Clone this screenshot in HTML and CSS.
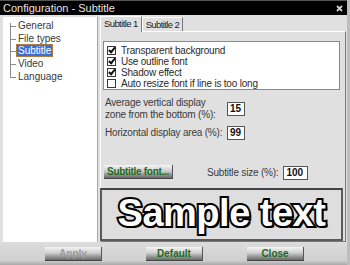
FILE: index.html
```html
<!DOCTYPE html>
<html lang="en">

<head>
    <meta charset="UTF-8">
    <title>Configuration - Subtitle</title>
    <link rel="stylesheet" href="styles.css">
</head>

<body>
    <div class="window">
        <div class="titlebar">
            <span>Configuration - Subtitle</span>
            <svg class="close" width="7" height="7" viewBox="0 0 7 7">
                <path d="M1 1L6 6M6 1L1 6" stroke="#d0d0d0" stroke-width="1.8" />
            </svg>
        </div>

        <div class="main">
            <ul class="tree">
                <li>General</li>
                <li>File types</li>
                <li><span class="selected">Subtitle</span></li>
                <li>Video</li>
                <li class="last">Language</li>
            </ul>

            <div class="tabs">
                <div class="tab-headers">
                    <span class="tab active">Subtitle 1</span>
                    <span class="tab">Subtitle 2</span>
                </div>
                <div class="tab-panel">
                    <div class="checks">
                        <div class="check"><span class="box on"></span>Transparent background</div>
                        <div class="check"><span class="box on"></span>Use outline font</div>
                        <div class="check"><span class="box on"></span>Shadow effect</div>
                        <div class="check"><span class="box"></span>Auto resize font if line is too long</div>
                    </div>

                    <div class="settings">
                        <div class="label">Average vertical display<br>zone from the bottom (%):</div>
                        <div class="input">15</div>
                        <div class="label">Horizontal display area (%):</div>
                        <div class="input">99</div>
                    </div>

                    <div class="font-row">
                        <button class="skin-button">Subtitle font...</button>
                        <span class="label size-label">Subtitle size (%):</span>
                        <div class="input wide">100</div>
                    </div>

                    <div class="sample">Sample text</div>
                </div>
            </div>
        </div>

        <div class="buttons">
            <button class="skin-button disabled">Apply</button>
            <button class="skin-button">Default</button>
            <button class="skin-button">Close</button>
        </div>
    </div>
</body>

</html>
```

FILE: styles.css
```css
body {
    margin: 0;
    padding: 0;
    font-family: "Liberation Sans", Arial, sans-serif;
    font-size: 10px;
    color: #2a2a2a;
}

.window {
    width: 350px;
    height: 265px;
    background-color: #e0e0e0;
    display: flex;
    flex-direction: column;
    box-sizing: border-box;
    border-right: 3px solid #bdbdbd;
    overflow: hidden;
}

.titlebar {
    height: 15px;
    background-color: #000;
    color: #e4e4e4;
    font-size: 11px;
    padding: 0 4px 0 3px;
    display: flex;
    justify-content: space-between;
    align-items: center;
    border-top: 1px solid #555;
    box-sizing: border-box;
}

.main {
    display: flex;
    height: 227px;
    padding: 2px 0 0 3px;
    gap: 2px;
    box-sizing: border-box;
}

.tree {
    list-style: none;
    margin: 0;
    padding: 3px 0 0 0;
    width: 94px;
    background-color: #fff;
    border-right: 1px solid #a8a8a8;
}

.tree li {
    height: 12.7px;
    line-height: 12.7px;
    padding-left: 15px;
    position: relative;
    color: #3a3a3a;
}

.tree li::before {
    content: '';
    position: absolute;
    left: 7px;
    top: 0;
    bottom: 0;
    border-left: 1px solid #8c8c8c;
}

.tree li::after {
    content: '';
    position: absolute;
    left: 7px;
    width: 6px;
    top: 6px;
    border-top: 1px solid #8c8c8c;
}

.tree li:first-child::before {
    top: 3px;
}

.tree li.last::before {
    bottom: 6px;
}

.tree .selected {
    background-color: #3b6fd6;
    color: #fff;
    outline: 1px solid #b07a44;
    padding: 0 1px;
    margin-left: -1px;
}

.tabs {
    flex: 1;
    display: flex;
    flex-direction: column;
}

.tab-headers {
    display: flex;
    height: 14px;
    align-items: flex-end;
}

.tab {
    height: 13px;
    line-height: 13px;
    padding: 0 3px;
    border: 1px solid #fff;
    border-right-color: #777;
    border-bottom: none;
    color: #222;
    font-size: 9.5px;
    letter-spacing: -0.6px;
}

.tab.active {
    height: 15px;
    line-height: 14px;
    margin-bottom: -1px;
    background-color: #e0e0e0;
    position: relative;
    z-index: 1;
}

.tab-panel {
    flex: 1;
    border: 1px solid #fff;
    border-right-color: #7a7a7a;
    border-bottom-color: #7a7a7a;
    margin-right: 1px;
}

.checks {
    margin: 9px 5px 0 2px;
    height: 49px;
    box-sizing: border-box;
    background-color: #fff;
    border: 1px solid #8a8a8a;
    padding-top: 3px;
    letter-spacing: -0.2px;
}

.check {
    height: 11px;
    display: flex;
    align-items: center;
    padding-left: 3px;
}

.box {
    width: 7px;
    height: 7px;
    border: 1px solid #3a3a3a;
    background-color: #fff;
    margin-right: 5px;
    position: relative;
}

.box.on::after {
    content: '';
    position: absolute;
    left: 2px;
    top: -1px;
    width: 2px;
    height: 5px;
    border: solid #111;
    border-width: 0 2px 2px 0;
    transform: rotate(40deg);
}

.settings {
    display: grid;
    grid-template-columns: 122px 18px;
    align-items: center;
    row-gap: 6px;
    margin: 7px 0 0 4px;
}

.label {
    line-height: 11.5px;
    color: #3a3a3a;
    letter-spacing: -0.2px;
    white-space: nowrap;
}

.input {
    height: 14px;
    box-sizing: border-box;
    background-color: #fff;
    border: 1px solid #555;
    font-weight: bold;
    line-height: 12px;
    padding-left: 2px;
    color: #111;
}

.input.wide {
    width: 25px;
}

.font-row {
    display: flex;
    align-items: center;
    margin: 24px 0 0 3px;
    height: 15px;
}

.size-label {
    margin: 2px 5px 0 34px;
}

.font-row .input {
    margin-top: 2px;
}

.skin-button {
    font-family: "Liberation Sans", Arial, sans-serif;
    font-size: 10px;
    font-weight: bold;
    color: #1c6a1c;
    height: 14px;
    padding: 0;
    border: none;
    border-right: 1px solid #555;
    border-bottom: 1px solid #444;
    background: linear-gradient(#f4f4f4, #cfcfcf 45%, #8a8a8a 80%, #6a6a6a);
    box-sizing: border-box;
}

.font-row .skin-button {
    width: 69px;
    letter-spacing: -0.3px;
}

.sample {
    margin: 9px 2px 0 -1px;
    height: 53px;
    box-sizing: border-box;
    border: 2px solid #5a5a5a;
    border-top-color: #444;
    background-color: #dedede;
    display: flex;
    align-items: center;
    justify-content: center;
    padding-bottom: 3px;
    font-family: "Liberation Sans", Arial, sans-serif;
    font-weight: bold;
    font-size: 38px;
    color: #fff;
    -webkit-text-stroke: 4px #000;
    paint-order: stroke fill;
    text-shadow: 2px 2px 0 #000;
    letter-spacing: -0.5px;
}

.buttons {
    flex: 1;
    display: flex;
    align-items: center;
    gap: 44px;
    padding-left: 45px;
    background: linear-gradient(#dcdcdc, #cfcfcf 80%, #a9a9a9);
}

.buttons .skin-button {
    width: 57px;
}

.buttons .disabled {
    color: #9c9c9c;
}
```
